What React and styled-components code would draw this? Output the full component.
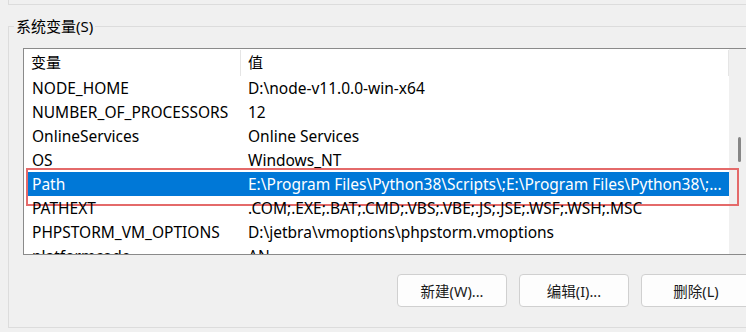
import React from "react";
import styled, { createGlobalStyle } from "styled-components";

const Global = createGlobalStyle`
  html, body { margin: 0; padding: 0; background: #f0f0f0; }
  body { font-family: "Noto Sans", "Noto Sans CJK SC", sans-serif; }
`;

const Page = styled.div`
  width: 746px;
  height: 332px;
  overflow: hidden;
  background: #f0f0f0;
  color: #000;
  font-family: "Noto Sans", "Noto Sans CJK SC", sans-serif;
  font-size: 15.5px;
`;

const PrevGroup = styled.div`
  margin-left: 8px;
  width: 760px;
  height: 4px;
  border-left: 1px solid #dcdcdc;
  border-bottom: 1px solid #dcdcdc;
`;

const GroupBox = styled.fieldset`
  margin: 12px 0 0 8px;
  padding: 0;
  width: 780px;
  border: 1px solid #dcdcdc;
  min-width: 0;
`;

const Legend = styled.legend`
  margin-left: 5px;
  padding: 0 2px;
  line-height: 18px;
  font-size: 15px;
  color: #000;
`;

const Inner = styled.div`
  padding: 13px 0 20px 14px;
`;

const ListBox = styled.div`
  box-sizing: border-box;
  width: 725px;
  height: 207px;
  border: 1px solid #8a8a8a;
  background: #fff;
  display: grid;
  grid-template-columns: 705px 1fr;
  overflow: hidden;
`;

const Content = styled.div`
  height: 205px;
`;

const Header = styled.div`
  display: grid;
  grid-template-columns: 217px 488px;
  height: 27px;
  font-size: 15px;
`;

const HeadCell = styled.div`
  box-sizing: border-box;
  padding-left: 7px;
  line-height: 27px;
  position: relative;
  &::after {
    content: "";
    position: absolute;
    right: 0;
    top: 1px;
    bottom: 0;
    width: 1px;
    background: #e5e5e5;
  }
`;

const Row = styled.div`
  margin-left: 4px;
  display: grid;
  grid-template-columns: 216px 1fr;
  height: 24px;
  line-height: 24px;
  position: relative;
  background: ${(p) => (p.$selected ? "#0078d7" : "transparent")};
  color: ${(p) => (p.$selected ? "#fff" : "#000")};
`;

const Cell = styled.div`
  padding-left: 4px;
  white-space: nowrap;
  overflow: hidden;
`;

const Highlight = styled.div`
  position: absolute;
  left: -2px;
  top: -4px;
  right: -10px;
  bottom: -10px;
  border: 2px solid #e46a6a;
  pointer-events: none;
`;

const ScrollTrack = styled.div`
  background: #f0f0f0;
  height: 205px;
`;

const Thumb = styled.div`
  margin: 88px 0 0 9px;
  width: 3px;
  height: 25px;
  border-radius: 2px;
  background: #868686;
`;

const ButtonRow = styled.div`
  display: flex;
  gap: 12px;
  margin-top: 19px;
  padding-left: 374px;
`;

const Button = styled.button`
  box-sizing: border-box;
  width: 110px;
  height: 33px;
  border: 1px solid #d0d0d0;
  border-radius: 4px;
  background: #fdfdfd;
  color: #1a1a1a;
  font-family: "Noto Sans", "Noto Sans CJK SC", sans-serif;
  font-size: 14.5px;
  padding: 0;
  flex: none;
`;

const rows = [
  ["NODE_HOME", "D:\\node-v11.0.0-win-x64"],
  ["NUMBER_OF_PROCESSORS", "12"],
  ["OnlineServices", "Online Services"],
  ["OS", "Windows_NT"],
  ["Path", "E:\\Program Files\\Python38\\Scripts\\;E:\\Program Files\\Python38\\;...", true],
  ["PATHEXT", ".COM;.EXE;.BAT;.CMD;.VBS;.VBE;.JS;.JSE;.WSF;.WSH;.MSC"],
  ["PHPSTORM_VM_OPTIONS", "D:\\jetbra\\vmoptions\\phpstorm.vmoptions"],
  ["platformcode", "AN"],
];

export default function App() {
  return (
    <Page>
      <Global />
      <PrevGroup />
      <GroupBox>
        <Legend>系统变量(S)</Legend>
        <Inner>
          <ListBox>
            <Content>
              <Header>
                <HeadCell>变量</HeadCell>
                <HeadCell>值</HeadCell>
              </Header>
              {rows.map(([name, value, sel]) => (
                <Row key={name} $selected={sel}>
                  <Cell>{name}</Cell>
                  <Cell>{value}</Cell>
                  {sel && <Highlight />}
                </Row>
              ))}
            </Content>
            <ScrollTrack>
              <Thumb />
            </ScrollTrack>
          </ListBox>
          <ButtonRow>
            <Button>新建(W)...</Button>
            <Button>编辑(I)...</Button>
            <Button>删除(L)</Button>
          </ButtonRow>
        </Inner>
      </GroupBox>
    </Page>
  );
}
